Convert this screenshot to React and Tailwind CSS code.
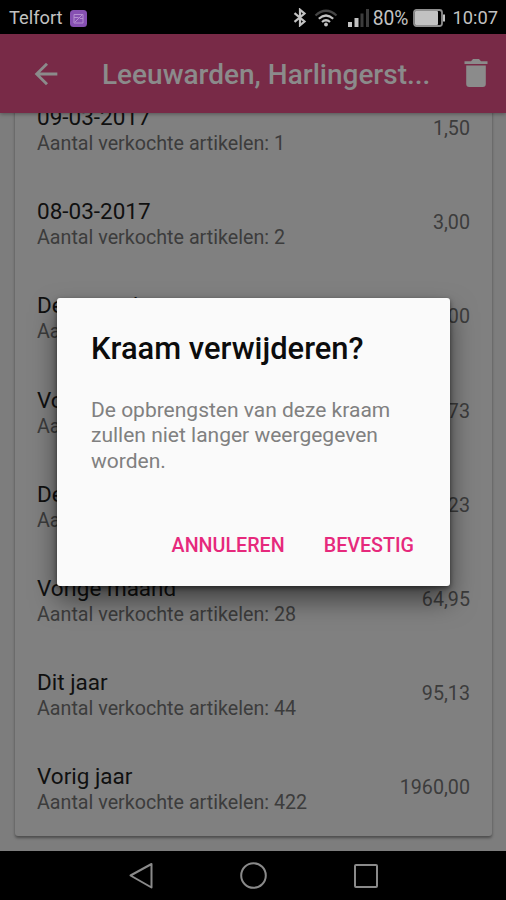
// src/App.jsx
import { MdArrowBack } from "react-icons/md";

const periods = [
  { label: "09-03-2017", count: 1, total: "1,50" },
  { label: "08-03-2017", count: 2, total: "3,00" },
  { label: "Deze week", count: 3, total: "4,00" },
  { label: "Vorige week", count: 8, total: "10,73" },
  { label: "Deze maand", count: 12, total: "24,23" },
  { label: "Vorige maand", count: 28, total: "64,95" },
  { label: "Dit jaar", count: 44, total: "95,13" },
  { label: "Vorig jaar", count: 422, total: "1960,00" },
];

function StatusBar() {
  return (
    <div className="flex h-[34px] shrink-0 items-center bg-black pl-[9px] pr-[8px] pt-[2px] text-[#c2c2c2]">
      <span className="pt-px text-[18.3px] leading-none">Telfort</span>
      <svg className="ml-[7px] h-[17px] w-[17px]" viewBox="0 0 17 17" fill="none">
        <rect width="17" height="17" rx="3.5" fill="#8650b2" />
        <path
          d="M4 4.5h9v8.5H4zM4 7.5h4.5M5 12l7-7M10 8.5h3"
          stroke="#b48fd0"
          strokeWidth="1"
        />
      </svg>

      <div className="ml-auto flex items-center">
        <svg className="h-[19px] w-[14px]" viewBox="0 0 14 19" fill="none">
          <path d="M1.5 5.2L11.5 13.5L7 17.3V1.7L11.5 5.5L1.5 13.8" stroke="#c2c2c2" strokeWidth="2.2" />
        </svg>
        <svg className="ml-[7px] h-[18px] w-[24px]" viewBox="0 0 24 18" fill="none" strokeWidth="2.2">
          <path d="M1.5 6.5Q12-3 22.5 6.5" stroke="#444" />
          <path d="M4.8 9.8Q12 3.2 19.2 9.8" stroke="#c2c2c2" />
          <path d="M8 13Q12 9.5 16 13" stroke="#c2c2c2" />
          <circle cx="12" cy="15.5" r="1.9" fill="#c2c2c2" />
        </svg>
        <svg className="ml-[10px] h-[18px] w-[22px]" viewBox="0 0 22 18">
          <path d="M0 13h4v5H0zM6.5 9h4v9h-4z" fill="#c2c2c2" />
          <path d="M12.5 4.5h3v13.5h-3zM18 0h3v18h-3z" fill="#3c3c3c" />
        </svg>
        <span className="ml-[3px] pt-[2px] text-[19.3px] leading-none">80%</span>
        <svg className="ml-[5px] h-[18px] w-[33px]" viewBox="0 0 33 18" fill="none">
          <rect x="1" y="1" width="28" height="16" rx="2.5" stroke="#8f8f8f" strokeWidth="1.8" />
          <rect x="2" y="2" width="23" height="14" rx="1" fill="#c2c2c2" />
          <path d="M30 5.5h2v7h-2z" fill="#c2c2c2" />
        </svg>
        <span className="ml-[6px] pt-px text-[18.3px] leading-none">10:07</span>
      </div>
    </div>
  );
}

function AppBar() {
  return (
    <div className="z-10 flex h-[79px] shrink-0 items-center bg-[#782a47] pl-[29px] pr-[18px] text-[#8b8b8b] shadow-[0_1px_4px_rgba(0,0,0,0.35)]">
      <MdArrowBack className="h-[34px] w-[34px]" />
      <h1 className="ml-[39px] whitespace-nowrap pt-[2px] text-[28px] font-medium leading-none">
        Leeuwarden, Harlingerst...
      </h1>
      <svg className="mb-px ml-auto h-[28px] w-[24px]" viewBox="0 0 24 28" fill="currentColor">
        <path d="M.5 2.3h6.5L9 0h6l2 2.3h6.5V5H.5z" />
        <path d="M2.2 6.5h19.6V25a3 3 0 0 1-3 3H5.2a3 3 0 0 1-3-3z" />
      </svg>
    </div>
  );
}

function PeriodRow({ period }) {
  return (
    <div className="flex h-[94.2px] shrink-0 items-center justify-between px-[22px] pt-[2px]">
      <div>
        <p className="text-[22.5px] leading-[26px] text-[#101010]">{period.label}</p>
        <p className="pt-px text-[19.7px] leading-[26px] text-[#3c3c3c]">
          Aantal verkochte artikelen: {period.count}
        </p>
      </div>
      <span className="pb-[3px] text-[19.7px] leading-[26px] text-[#3c3c3c]">{period.total}</span>
    </div>
  );
}

function ConfirmDialog() {
  return (
    <div className="absolute left-[57px] top-[298px] z-20 flex h-[288px] w-[393px] flex-col rounded-[3px] bg-[#fafafa] pl-[34px] pr-[25px] pt-[33px] shadow-[0_14px_26px_rgba(0,0,0,0.5),0_2px_5px_rgba(0,0,0,0.5)]">
      <h2 className="text-[30.9px] font-medium leading-[35px] text-[#0c0c0c]">Kraam verwijderen?</h2>
      <p className="mt-[32px] text-[21px] leading-[25.3px] text-[#808080]">
        De opbrengsten van deze kraam zullen niet langer weergegeven worden.
      </p>
      <div className="mt-[60px] flex justify-end gap-[39px] pr-[11px] text-[19.7px] font-medium leading-[24px] text-[#e6297c]">
        <button type="button">ANNULEREN</button>
        <button type="button">BEVESTIG</button>
      </div>
    </div>
  );
}

function NavBar() {
  return (
    <div className="flex h-[49px] shrink-0 items-center justify-center gap-[84px] bg-black pl-[2px] text-[#8a8a8a]">
      <svg className="h-[28px] w-[28px]" viewBox="0 0 28 28" fill="none" stroke="currentColor" strokeWidth="2">
        <path d="M2.5 13.5L23.5 2v23.5z" strokeLinejoin="round" />
      </svg>
      <svg className="h-[28px] w-[28px]" viewBox="0 0 28 28" fill="none" stroke="currentColor" strokeWidth="2">
        <circle cx="13.5" cy="13.5" r="12.3" />
      </svg>
      <svg className="h-[28px] w-[28px]" viewBox="0 0 28 28" fill="none" stroke="currentColor" strokeWidth="2">
        <rect x="3" y="3" width="22" height="22" rx="1" />
      </svg>
    </div>
  );
}

export default function App() {
  return (
    <div className="relative flex h-[900px] w-[506px] flex-col overflow-hidden bg-[#7d7d7d] font-['Roboto',sans-serif]">
      <StatusBar />
      <AppBar />

      <div className="flex min-h-0 flex-1 flex-col justify-end overflow-hidden pb-[15px] pl-[15px] pr-[14px]">
        <div className="rounded-[3px] bg-[#808080] shadow-[0_2px_3px_rgba(0,0,0,0.4)]">
          {periods.map((period) => (
            <PeriodRow key={period.label} period={period} />
          ))}
        </div>
      </div>

      <NavBar />
      <ConfirmDialog />
    </div>
  );
}
